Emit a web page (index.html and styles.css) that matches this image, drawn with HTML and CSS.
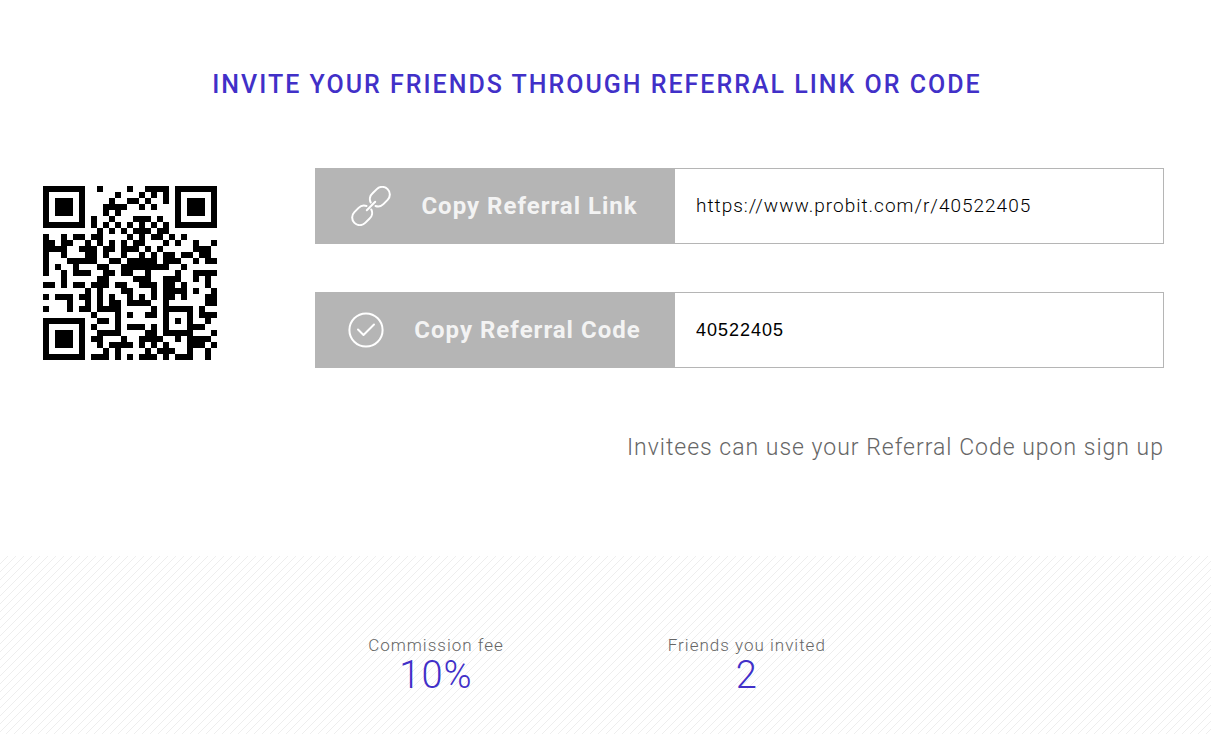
FILE: index.html
```html
<!DOCTYPE html>
<html lang="en">
<head>
    <meta charset="UTF-8">
    <title>Referral</title>
    <meta name="viewport" content="width=device-width, initial-scale=1">
    <link rel="stylesheet" href="styles.css">
</head>
<body>
<section class="invite">
    <h2 class="invite-title">Invite your friends through referral link or code</h2>
    <div class="invite-body">
        <svg class="qr" id="qr" viewBox="0 0 29 29" role="img" aria-label="Referral QR code" shape-rendering="crispEdges">
            <path id="qr-path"/>
        </svg>
        <div class="invite-fields">
            <div class="field">
                <button class="copy-btn" type="button" onclick="copy('link')">
                    <svg class="icon-link" viewBox="0 0 40 40" aria-hidden="true">
                        <path d="M19.7 16.5A7.6 7.6 0 0 1 21.6 7.3L25.8 3.1A7.6 7.6 0 0 1 36.6 13.9L32.4 18.1A7.6 7.6 0 0 1 24.5 20"/>
                        <path d="M20.3 23.5A7.6 7.6 0 0 1 18.4 32.7L14.2 36.9A7.6 7.6 0 0 1 3.4 26.1L7.6 21.9A7.6 7.6 0 0 1 15.5 20"/>
                        <path d="M15.8 24.2L24.2 15.8"/>
                    </svg>
                    Copy Referral Link
                </button>
                <input class="field-input" id="link" type="text" aria-label="Referral link" value="https://www.probit.com/r/40522405" readonly>
            </div>
            <div class="field">
                <button class="copy-btn" type="button" onclick="copy('code')">
                    <svg class="icon-check" viewBox="0 0 36 36" aria-hidden="true">
                        <circle cx="18" cy="18" r="16.6"/>
                        <path d="M10 17.5L15.5 23L26 12.5"/>
                    </svg>
                    Copy Referral Code
                </button>
                <input class="field-input field-code" id="code" type="text" aria-label="Referral code" value="40522405" readonly>
            </div>
            <p class="invite-note">Invitees can use your Referral Code upon sign up</p>
        </div>
    </div>
</section>
<section class="stats">
    <dl class="stat">
        <dt>Commission fee</dt>
        <dd>10%</dd>
    </dl>
    <dl class="stat">
        <dt>Friends you invited</dt>
        <dd>2</dd>
    </dl>
</section>
<script src="qrcode.js"></script>
<script>
    document.getElementById('qr-path').setAttribute('d', qrPath(document.getElementById('link').value));

    function copy(id) {
        document.getElementById(id).select();
        document.execCommand('copy');
    }
</script>
</body>
</html>
```
FILE: styles.css
```css
* {
    box-sizing: border-box;
}

body {
    margin: 0;
    min-height: 100vh;
    display: flex;
    flex-direction: column;
    font-family: Roboto, "Noto Sans", sans-serif;
    font-weight: 300;
    letter-spacing: 1px;
    color: #666;
    background: #fff;
}

.invite {
    padding: 69px 47px 92px 30px;
}

.invite-title {
    margin: 0 0 67px;
    font-size: 25px;
    line-height: 32px;
    font-weight: 500;
    letter-spacing: 2px;
    text-align: center;
    text-transform: uppercase;
    color: #4130c8;
}

.invite-body {
    display: flex;
    align-items: flex-start;
    gap: 98px;
    padding-left: 13px;
}

.qr {
    flex: none;
    width: 174px;
    height: 174px;
    margin-top: 18px;
}

.invite-fields {
    flex: 1;
    min-width: 0;
    display: flex;
    flex-direction: column;
    gap: 48px;
}

.field {
    display: flex;
    height: 76px;
    border: 1px solid #b5b5b5;
}

.copy-btn {
    flex: none;
    width: 359px;
    padding: 0 2px 0 0;
    display: flex;
    align-items: center;
    justify-content: center;
    gap: 30px;
    border: 0;
    background: #b5b5b5;
    color: #f3f3f3;
    font-family: inherit;
    font-size: 24px;
    font-weight: 700;
    letter-spacing: 1px;
    cursor: pointer;
}

.copy-btn svg {
    flex: none;
    fill: none;
    stroke: #fff;
    stroke-width: 2;
    stroke-linecap: round;
    stroke-linejoin: round;
}

.icon-link {
    width: 40px;
    height: 40px;
}

.icon-check {
    width: 36px;
    height: 36px;
}

.field-input {
    flex: 1;
    min-width: 0;
    padding: 0 21px 2px;
    border: 0;
    outline: 0;
    background: #fff;
    color: #000;
    font-family: inherit;
    font-size: 19px;
    font-weight: 300;
    letter-spacing: 1px;
}

.field-code {
    padding-bottom: 0;
    font-family: "Liberation Sans", Arial, sans-serif;
    font-size: 18px;
    font-weight: 400;
}

.invite-note {
    margin: 16px 0 0;
    font-size: 23px;
    line-height: 32px;
    text-align: right;
}

.stats {
    flex: 1;
    display: flex;
    justify-content: center;
    gap: 164px;
    padding: 78px 47px 40px 30px;
    background: #fff linear-gradient(135deg, transparent 46%, #eee 46%, #eee 54%, transparent 54%) 0 0 / 8px 8px;
}

.stat {
    margin: 0;
    text-align: center;
}

.stat dt {
    font-size: 17px;
    line-height: 22px;
}

.stat dd {
    margin: 0;
    font-size: 38px;
    line-height: 38px;
    color: #4130c8;
}
```
FILE: qrcode.js
```js
// QR version 3, level M, byte mode: 44 data codewords + 26 for correction
const SIZE = 29, DATA = 44, ECC = 26;
const FORMAT = '100101010100000'; // level M, mask 7

function gfMul(a, b) {
    let r = 0;
    for (; b; b >>= 1) {
        if (b & 1) r ^= a;
        a <<= 1;
        if (a & 256) a ^= 0x11d;
    }
    return r;
}

function codewords(text) {
    let bits = '0100' + text.length.toString(2).padStart(8, '0');
    for (const ch of text) bits += ch.charCodeAt(0).toString(2).padStart(8, '0');
    bits += '0000';
    const data = bits.match(/.{8}/g).map(b => parseInt(b, 2));
    for (let pad = 0xec; data.length < DATA; pad ^= 0xfd) data.push(pad);

    // generator polynomial, leading 1 left out
    const gen = new Array(ECC).fill(0);
    gen[ECC - 1] = 1;
    let root = 1;
    for (let i = 0; i < ECC; i++) {
        for (let j = 0; j < ECC; j++) {
            gen[j] = gfMul(gen[j], root) ^ (j + 1 < ECC ? gen[j + 1] : 0);
        }
        root = gfMul(root, 2);
    }
    const rem = new Array(ECC).fill(0);
    for (const byte of data) {
        const f = byte ^ rem.shift();
        rem.push(0);
        gen.forEach((g, i) => rem[i] ^= gfMul(g, f));
    }
    return data.concat(rem);
}

function qrPath(text) {
    const grid = Array.from({length: SIZE}, () => new Array(SIZE).fill(null));

    function square(row, col, radius, light) {
        for (let y = -radius; y <= radius; y++) {
            for (let x = -radius; x <= radius; x++) {
                const r = row + y, c = col + x;
                if (r < 0 || c < 0 || r >= SIZE || c >= SIZE) continue;
                const d = Math.max(Math.abs(x), Math.abs(y));
                grid[r][c] = light.includes(d) ? 0 : 1;
            }
        }
    }

    for (let i = 0; i < SIZE; i++) grid[6][i] = grid[i][6] = 1 - i % 2;
    square(3, 3, 4, [2, 4]);
    square(3, SIZE - 4, 4, [2, 4]);
    square(SIZE - 4, 3, 4, [2, 4]);
    square(22, 22, 2, [1]);

    for (let i = 0; i < 15; i++) {
        const bit = +FORMAT[i];
        if (i < 8) grid[8][i < 6 ? i : i + 1] = bit;
        else grid[i === 8 ? 7 : 14 - i][8] = bit;
        if (i < 7) grid[SIZE - 1 - i][8] = bit;
        else grid[8][SIZE - 15 + i] = bit;
    }
    grid[SIZE - 8][8] = 1;

    const bits = codewords(text).map(b => b.toString(2).padStart(8, '0')).join('');
    let n = 0, up = true;
    for (let right = SIZE - 1; right > 0; right -= 2) {
        if (right === 6) right = 5;
        for (let i = 0; i < SIZE; i++) {
            const r = up ? SIZE - 1 - i : i;
            for (const c of [right, right - 1]) {
                if (grid[r][c] !== null) continue;
                const flip = ((r + c) % 2 + r * c % 3) % 2 === 0;
                grid[r][c] = +(bits[n++] || 0) ^ flip;
            }
        }
        up = !up;
    }

    let d = '';
    grid.forEach((line, y) => line.forEach((on, x) => {
        if (on) d += `M${x} ${y}h1v1h-1z`;
    }));
    return d;
}
```
